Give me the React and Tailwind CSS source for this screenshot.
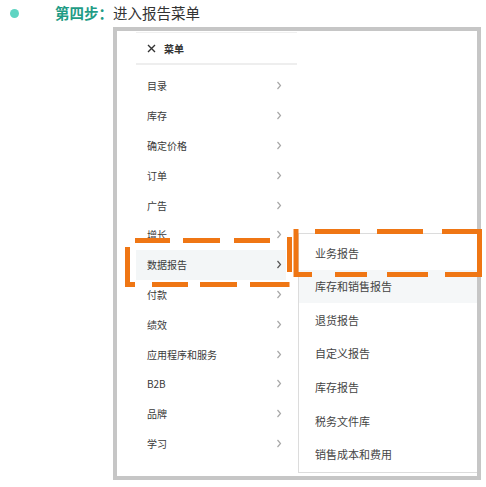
import React from 'react';

const menuItems = [
  '目录', '库存', '确定价格', '订单', '广告', '增长', '数据报告',
  '付款', '绩效', '应用程序和服务', 'B2B', '品牌', '学习',
];

const reportItems = [
  '业务报告', '库存和销售报告', '退货报告', '自定义报告', '库存报告', '税务文件库', '销售成本和费用',
];

const Chevron = ({ dark }) => (
  <svg width="6" height="9" viewBox="0 0 6 9" fill="none">
    <polyline
      points="1.5,1 4.5,4.5 1.5,8"
      stroke={dark ? '#555' : '#a8a8a8'}
      strokeWidth="1.2"
    />
  </svg>
);

// orange dashed annotation boxes, drawn as explicit dash segments
const hDash = [
  // box around 数据报告
  [240.5, 135, 170], [240.5, 183, 220], [240.5, 234, 270],
  [284.5, 125, 135], [284.5, 152, 188], [284.5, 200, 237], [284.5, 250, 289.5],
  // box around 业务报告
  [231.5, 315, 360], [231.5, 377, 423], [231.5, 442, 482],
  [274.5, 294, 312], [274.5, 335, 367], [274.5, 387, 428], [274.5, 445, 482],
];
const vDash = [
  [127.5, 247, 287], [289.5, 237, 272],
  [296, 229, 277], [479.5, 229, 277],
];

const Annotations = () => (
  <svg className="absolute inset-0 pointer-events-none" width="486" height="487">
    {hDash.map(([y, x1, x2], i) => (
      <line key={'h' + i} x1={x1} y1={y} x2={x2} y2={y} stroke="#ef7614" strokeWidth="5" />
    ))}
    {vDash.map(([x, y1, y2], i) => (
      <line key={'v' + i} x1={x} y1={y1} x2={x} y2={y2} stroke="#ef7614" strokeWidth="5" />
    ))}
  </svg>
);

export default function App() {
  return (
    <div
      className="relative w-[486px] h-[487px] bg-white overflow-hidden"
      style={{ fontFamily: '"Noto Sans CJK SC", "Noto Sans", sans-serif' }}
    >
      {/* step title */}
      <div className="flex items-center h-[26px] pl-[10px]">
        <span className="w-[9px] h-[9px] rounded-full bg-[#5fd4c2]" />
        <span className="ml-[36px] text-[14.5px] leading-none font-bold text-[#1f9c86]">第四步：</span>
        <span className="text-[14.5px] leading-none text-[#333]">进入报告菜单</span>
      </div>

      {/* screenshot frame */}
      <div className="ml-[113px] mt-[1px] w-[368px] h-[453px] border-[4px] border-[#c6c6c6] bg-white flex">
        {/* main menu */}
        <div className="ml-[19px] w-[161px] border-t border-[#f0f0f0] mt-[1px]">
          <div className="h-[31px] mt-[1px] flex items-center pl-[11px] gap-[8px] border-b-2 border-[#eeeeee]">
            <svg width="9" height="9" viewBox="0 0 9 9">
              <path d="M1 1 L8 8 M8 1 L1 8" stroke="#333" strokeWidth="1.4" />
            </svg>
            <span className="text-[10px] font-bold text-[#333]">菜单</span>
          </div>
          <div className="mt-[6px]">
            {menuItems.map((t) => {
              const active = t === '数据报告';
              return (
                <div
                  key={t}
                  className={`h-[29.8px] flex items-center justify-between pl-[11px] w-[150px] pr-[4px] ${active ? 'bg-[#f3f6f7]' : ''}`}
                >
                  <span className="text-[10px] text-[#3a3a3a]">{t}</span>
                  <Chevron dark={active} />
                </div>
              );
            })}
          </div>
        </div>

        {/* reports submenu */}
        <div className="mt-[202px] mb-[3px] ml-[1px] flex-1 border border-r-0 border-[#dcdcdc] pt-[2px]">
          {reportItems.map((t) => (
            <div
              key={t}
              className={`h-[33.6px] flex items-center pl-[16px] ${t === '库存和销售报告' ? 'bg-[#f5f7f8]' : ''}`}
            >
              <span className="text-[11px] text-[#444]">{t}</span>
            </div>
          ))}
        </div>
      </div>

      <Annotations />
    </div>
  );
}
